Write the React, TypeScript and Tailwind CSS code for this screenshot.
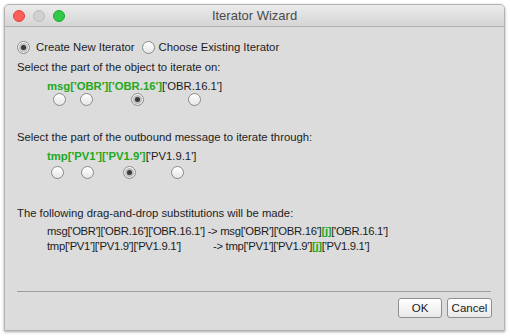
import React from "react";

const font = { fontFamily: '"Liberation Sans", Arial, sans-serif' };

function Radio({ checked = false }: { checked?: boolean }) {
  return (
    <span className="w-[13px] h-[13px] rounded-full border border-[#8a8a8a] bg-gradient-to-b from-white to-[#e6e6e6] flex items-center justify-center shrink-0">
      {checked && <span className="w-[5px] h-[5px] rounded-full bg-[#3a3a3a] ring-2 ring-[#bdbdbd]" />}
    </span>
  );
}

function Green({ children }: { children: React.ReactNode }) {
  return <span className="font-bold text-[#22a822]">{children}</span>;
}

export default function App() {
  return (
    <div className="w-[510px] h-[336px] bg-white p-[4px]" style={font}>
      <div className="w-[501px] h-[327px] flex flex-col border border-[#b3b3b3] rounded-t-[5px] bg-[#dcdcdc] shadow-[0_1px_3px_rgba(0,0,0,0.35)] overflow-hidden text-[11.3px] leading-[16px] text-[#1c1c1c] whitespace-nowrap">
        {/* Title bar */}
        <div className="h-[22px] relative flex items-center justify-center bg-gradient-to-b from-[#ebebeb] to-[#d5d5d5] border-b border-[#b1b1b1] shrink-0">
          <div className="absolute left-[8px] top-[5px] flex gap-[8px]">
            <span className="w-[12px] h-[12px] rounded-full bg-[#fc5f57] border border-[#e0443e]" />
            <span className="w-[12px] h-[12px] rounded-full bg-[#d0d0d0] border border-[#bcbcbc]" />
            <span className="w-[12px] h-[12px] rounded-full bg-[#34c84a] border border-[#1dab2a]" />
          </div>
          <span className="text-[13px] text-[#4a4a4a]">Iterator Wizard</span>
        </div>

        {/* Body */}
        <div className="flex-1 flex flex-col px-[12px] pt-[12px]">
          <div className="flex items-center h-[16px]">
            <Radio checked />
            <span className="ml-[6px]">Create New Iterator</span>
            <span className="ml-[7px]"><Radio /></span>
            <span className="ml-[4px]">Choose Existing Iterator</span>
          </div>

          <div className="mt-[4px]">Select the part of the object to iterate on:</div>
          <div className="mt-[4px] pl-[30px] leading-[14px]">
            <Green>msg['OBR']['OBR.16']</Green>['OBR.16.1']
          </div>
          <div className="flex h-[13px] pl-[36px]">
            <Radio />
            <span className="ml-[14px]"><Radio /></span>
            <span className="ml-[38px]"><Radio checked /></span>
            <span className="ml-[44px]"><Radio /></span>
          </div>

          <div className="mt-[23px]">Select the part of the outbound message to iterate through:</div>
          <div className="mt-[4px] pl-[30px] leading-[14px]">
            <Green>tmp['PV1']['PV1.9']</Green>['PV1.9.1']
          </div>
          <div className="flex h-[13px] mt-[3px] pl-[34px]">
            <Radio />
            <span className="ml-[17px]"><Radio /></span>
            <span className="ml-[29px]"><Radio checked /></span>
            <span className="ml-[35px]"><Radio /></span>
          </div>

          <div className="mt-[26px]">The following drag-and-drop substitutions will be made:</div>
          <div className="mt-[3px] pl-[30px] leading-[15px] tracking-[-0.3px]">
            <div className="flex">
              <span>msg['OBR']['OBR.16']['OBR.16.1']&nbsp;</span>
              <span>-&gt; msg['OBR']['OBR.16']<Green>[j]</Green>['OBR.16.1']</span>
            </div>
            <div className="flex">
              <span className="w-[166px] shrink-0">tmp['PV1']['PV1.9']['PV1.9.1']</span>
              <span>-&gt; tmp['PV1']['PV1.9']<Green>[j]</Green>['PV1.9.1']</span>
            </div>
          </div>

          {/* Footer */}
          <div className="mt-auto mb-[12px]">
            <div className="h-px bg-[#9c9c9c] mr-[1px]" />
            <div className="flex justify-end gap-[5px] mt-[6px]">
              <button className="w-[44px] h-[20px] rounded-[3px] border border-[#8e8e8e] bg-gradient-to-b from-white to-[#e9e9e9] text-[11.5px] text-[#1c1c1c]">OK</button>
              <button className="w-[45px] h-[20px] rounded-[3px] border border-[#8e8e8e] bg-gradient-to-b from-white to-[#e9e9e9] text-[11.5px] text-[#1c1c1c]">Cancel</button>
            </div>
          </div>
        </div>
      </div>
    </div>
  );
}
